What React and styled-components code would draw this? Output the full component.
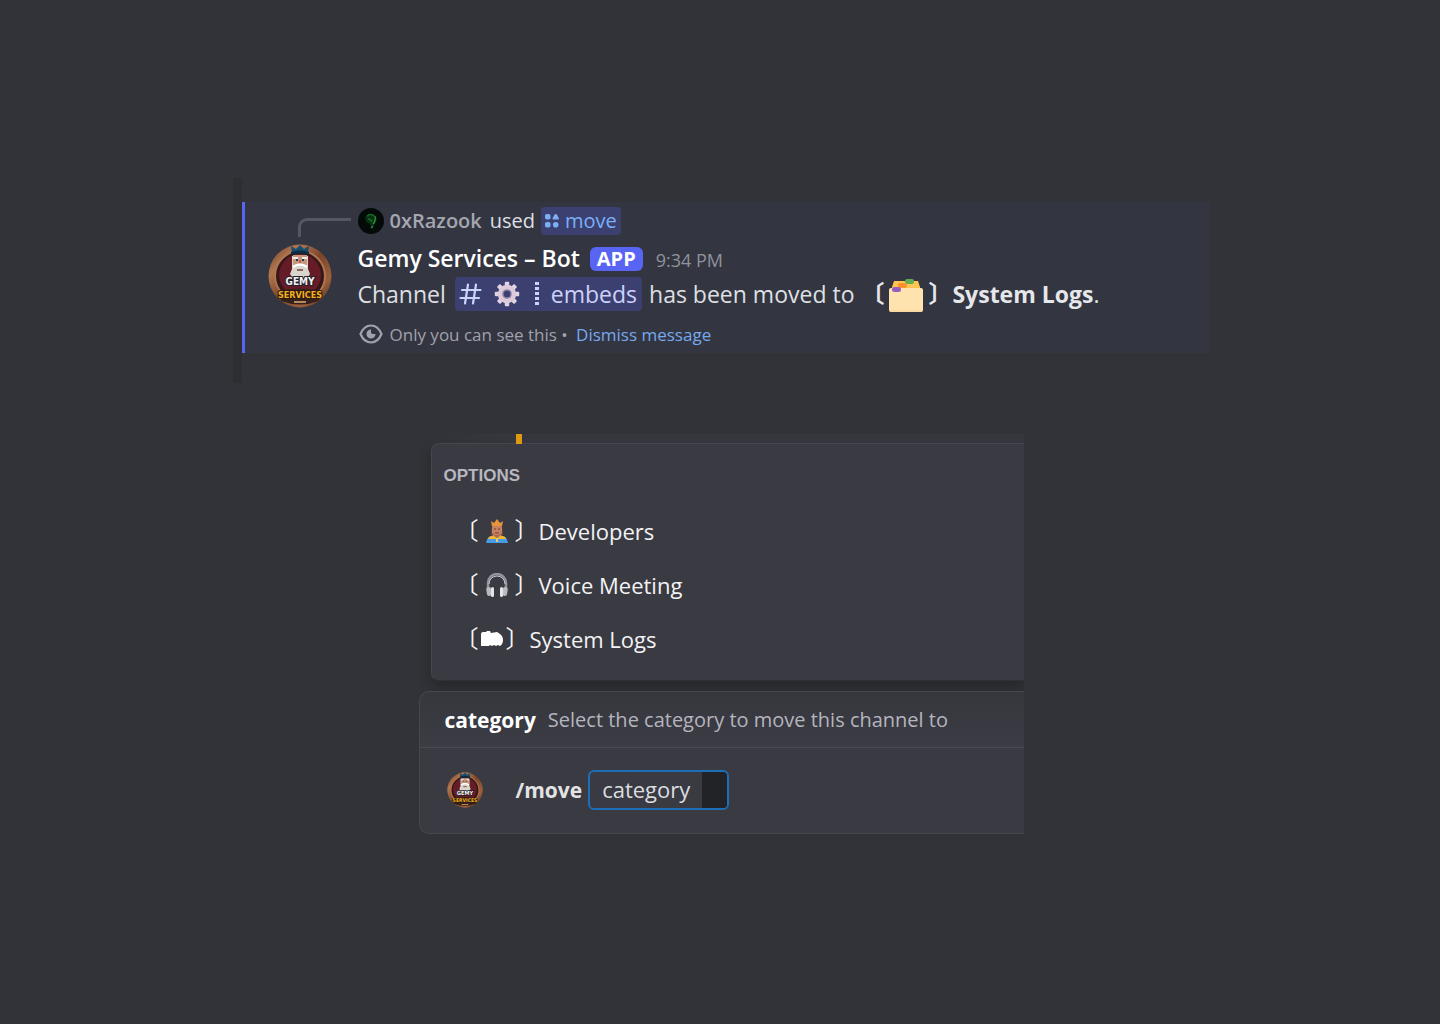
import React from "react";
import styled, { createGlobalStyle } from "styled-components";

const GlobalStyle = createGlobalStyle`
  *, *::before, *::after { box-sizing: border-box; }
  body {
    margin: 0;
    background: #323338;
    color: #dfe0e4;
    font-family: "Open Sans", "Noto Sans", "Noto Sans CJK JP", sans-serif;
  }
  button, input { font: inherit; color: inherit; }
`;

const Page = styled.main`
  display: flex;
  flex-direction: column;
  align-items: center;
  gap: 51px;
  min-height: 100vh;
  padding: 178px 24px 48px 26px;
`;

/* ---------- message ---------- */

const Thread = styled.section`
  display: flex;
  align-items: center;
  width: 100%;
  max-width: 977px;
  padding: 24px 0 30px;
  border-left: 9px solid #2d2e32;
`;

const Message = styled.article`
  display: flex;
  gap: 26px;
  flex: 1;
  padding-left: 23px;
  border-left: 3px solid #5865f2;
  background: #333541;
`;

const AvatarColumn = styled.div`
  display: flex;
  flex-direction: column;
  flex: none;
  width: 64px;
  padding-top: 16px;
`;

const Spine = styled.div`
  width: 53px;
  height: 19px;
  margin: 0 0 7px 30px;
  border-left: 3px solid #555762;
  border-top: 3px solid #555762;
  border-top-left-radius: 9px;
`;

const Body = styled.div`
  flex: 1;
  min-width: 0;
`;

const ReplyLine = styled.div`
  display: flex;
  align-items: center;
  height: 37px;
  font-size: 20px;
  line-height: 28px;
  color: #dfe0e4;
`;

const Invoker = styled.span`
  margin: 0 8px 0 6px;
  font-weight: 600;
  color: #a5a7b0;
`;

const CommandChip = styled.button`
  display: inline-flex;
  align-items: center;
  gap: 6px;
  height: 28px;
  margin-left: 6px;
  padding: 0 4px;
  border: 0;
  border-radius: 4px;
  background: #3c4070;
  color: #7bb0f5;
`;

const NameLine = styled.header`
  display: flex;
  align-items: center;
  height: 38px;
`;

const BotName = styled.h2`
  margin: 0;
  font-size: 23px;
  font-weight: 600;
  line-height: 36px;
  color: #fff;
`;

const AppTag = styled.span`
  height: 24px;
  margin: 2px 13px 0 10px;
  padding: 0 7px;
  border-radius: 6px;
  background: #5865f2;
  color: #fff;
  font-size: 20px;
  font-weight: 700;
  line-height: 24px;
`;

const Time = styled.time`
  padding-top: 3px;
  font-size: 18px;
  line-height: 24px;
  color: #90929c;
`;

const Content = styled.p`
  display: flex;
  align-items: center;
  height: 34px;
  margin: 0;
  font-size: 23px;
  line-height: 34px;
  white-space: pre;
`;

const ChannelMention = styled.a`
  display: inline-flex;
  align-items: center;
  height: 34px;
  margin: 0 7px 0 9px;
  padding: 0 5px 0 4px;
  border-radius: 4px;
  background: #3c4070;
  color: #ccd3fb;
  text-decoration: none;
`;

const Gear = styled.svg`
  margin: 0 15px 0 12px;
`;

const Divider = styled.svg`
  margin: 0 12px 0 0;
`;

const Destination = styled.strong`
  display: inline-flex;
  align-items: center;
  color: #e6e7ea;

  svg { margin: 2px 4px 0; }
`;

const Bracket = styled.span`
  padding-bottom: 5px;
  font-family: "Noto Sans CJK JP", sans-serif;
  font-size: 24px;
  font-weight: ${(p) => (p.$bold ? 700 : 400)};
  line-height: 34px;
`;

const Notice = styled.footer`
  display: flex;
  align-items: center;
  height: 42px;
  padding: 4px 0 0 1px;
  font-size: 17px;
  color: #a0a2ac;
  white-space: pre;

  svg { margin-right: 7px; }
  a { margin-left: 4px; color: #76a9ee; text-decoration: none; }
`;

/* ---------- slash command composer ---------- */

const Command = styled.section`
  width: 100%;
  max-width: 605px;
  overflow: hidden;
`;

const Strip = styled.div`
  display: flex;
  height: 10px;
  padding-left: 97px;
  margin-bottom: -1px;
  background: linear-gradient(90deg, #323338 0, #37373f 96px);
`;

const Mark = styled.i`
  position: relative;
  z-index: 1;
  width: 6px;
  background: #dd9a10;
`;

const Options = styled.div`
  margin: 0 0 10px 12px;
  padding: 16px 12px 14px;
  border: 1px solid #46474e;
  border-right: 0;
  border-bottom-color: #303136;
  border-radius: 8px 0 0 8px;
  background: #3a3a42;
  box-shadow: 0 8px 16px rgba(0, 0, 0, 0.24);
`;

const OptionsTitle = styled.h3`
  margin: 0 0 12px;
  font-family: "Liberation Sans", Arial, sans-serif;
  font-size: 17px;
  font-weight: 700;
  line-height: 32px;
  color: #b6b7bf;
`;

const OptionList = styled.ul`
  margin: 0;
  padding: 0;
  list-style: none;
`;

const Option = styled.button`
  display: flex;
  align-items: center;
  width: 100%;
  height: 54px;
  padding: 0 0 0 11px;
  border: 0;
  background: none;
  color: #f2f3f5;
  font-size: 22px;
  text-align: left;
`;

const Glyph = styled.span`
  display: inline-flex;
  justify-content: center;
  width: ${(p) => (p.$narrow ? 27 : 36)}px;
`;

const Composer = styled.form`
  position: relative;
  border: 1px solid #46474e;
  border-right: 0;
  border-radius: 10px 0 0 10px;
  background: #3a3a42;
`;

const Hint = styled.div`
  display: flex;
  align-items: center;
  gap: 12px;
  height: 56px;
  padding-left: 25px;
  border-bottom: 1px solid #484951;
  background: linear-gradient(#36363d, #3c3c45);
  border-top-left-radius: 10px;
  font-size: 20px;
  color: #b4b5be;

  strong { font-size: 21px; color: #fff; }
`;

const CommandRow = styled.div`
  display: flex;
  align-items: center;
  height: 85px;
  padding: 0 0 2px 27px;
`;

const CommandName = styled.span`
  margin: 0 6px 0 33px;
  font-size: 21px;
  font-weight: 700;
  color: #e2e3e6;
`;

const Field = styled.label`
  display: flex;
  height: 40px;
  overflow: hidden;
  border: 2px solid #1b6fb8;
  border-radius: 6px;
  padding-left: 12px;
  font-size: 22px;
  line-height: 34px;
  color: #dcdde1;
`;

const FieldInput = styled.input`
  width: 25px;
  margin-left: 12px;
  padding: 0;
  border: 0;
  outline: 0;
  background: #222327;
`;

/* ---------- drawings ---------- */

function BotAvatar({ size, id }) {
  return (
    <svg width={size} height={size} viewBox="0 0 64 64" aria-hidden="true">
      <defs>
        <linearGradient id={id} x1="0" y1="0" x2="1" y2="1">
          <stop offset="0" stopColor="#6e3d25" />
          <stop offset="0.25" stopColor="#b0764f" />
          <stop offset="0.5" stopColor="#7b452a" />
          <stop offset="0.75" stopColor="#9c603c" />
          <stop offset="1" stopColor="#3d241b" />
        </linearGradient>
      </defs>
      <circle cx="32" cy="32" r="31.5" fill={`url(#${id})`} />
      <circle cx="32" cy="32" r="26" fill="#b0764f" />
      <circle cx="32" cy="32" r="24" fill="#351719" />
      <circle cx="32" cy="31" r="21" fill="#651c26" />
      <path d="M24 12h16v13l2 5-4 6H26l-4-6 2-5z" fill="#d8d5cd" />
      <path d="M25 11h14v10H25z" fill="#c9957b" />
      <path d="M25 14h5M34 14h5" stroke="#eee" strokeWidth="2" />
      <path d="M28 16h2M34 16h2" stroke="#26364a" strokeWidth="2" />
      <path d="M31 16h2v5h-2z" fill="#a9684f" />
      <path d="M25 23q7-5 14 0" stroke="#fff" strokeWidth="2.5" fill="none" />
      <path d="M29 26h6" stroke="#733e35" strokeWidth="1.5" />
      <path d="M23 2l5 3 4-4 4 4 5-3-1 8q-8-2-16 0z" fill="#174f6e" />
      <path d="M23 8q9-3 18 0v3q-9-3-18 0z" fill="#0d2d42" />
      <path d="M10 47q22-5 44 0l-3 10q-19 7-38 0z" fill="#35211b" />
      <g fontFamily="'Liberation Sans Narrow', 'DejaVu Sans Condensed', sans-serif" fontWeight="700" textAnchor="middle" paintOrder="stroke">
        <text x="32" y="41" fontSize="10" fill="#f2f2f4" stroke="#25212a" strokeWidth="2">GEMY</text>
        <text x="32" y="54" fontSize="9" fill="#f2b01e" stroke="#2b1811" strokeWidth="2">SERVICES</text>
      </g>
      <path d="M26 58h12" stroke="#e2ad7d" strokeWidth="1.5" />
    </svg>
  );
}

function UserAvatar() {
  return (
    <svg width="26" height="26" viewBox="0 0 26 26" aria-hidden="true">
      <circle cx="13" cy="13" r="13" fill="#030a07" />
      <path d="M7 9q6-6 11-1 2 4-1 7l-3 6-2-5-4-2z" fill="#0a3013" />
      <path d="M9 8q4-3 7 0M10 11q3 0 4 3" stroke="#166b27" strokeWidth="1.6" fill="none" />
      <path d="M17 8q1 5-2 8M15 18l-2 2" stroke="#2a9a3c" strokeWidth="1.2" fill="none" />
    </svg>
  );
}

function CommandIcon() {
  return (
    <svg width="14" height="14" viewBox="0 0 14 14" fill="currentColor" aria-hidden="true">
      <rect x="0" y="0" width="5.5" height="5.5" rx="1.8" />
      <path d="M10.7 0q1 0 1.400 1l1.600 3q.500 1.500-1 1.500h-4q-1.500 0-1-1.500l1.600-3q.400-1 1.400-1z" />
      <rect x="0" y="8" width="5.5" height="5.5" rx="1.8" />
      <circle cx="10.7" cy="10.7" r="2.8" />
    </svg>
  );
}

function GearIcon() {
  const teeth = [0, 45, 90, 135, 180, 225, 270, 315];
  return (
    <Gear width="26" height="26" viewBox="0 0 26 26" aria-hidden="true">
      {teeth.map((a) => (
        <rect key={a} x="10.8" y="0.8" width="4.4" height="6" rx="1" fill="#e2d4e2" transform={`rotate(${a} 13 13)`} />
      ))}
      <circle cx="13" cy="13" r="6.5" fill="none" stroke="#dccada" strokeWidth="5.4" />
      <circle cx="13" cy="13" r="4.2" fill="none" stroke="#8f80a6" strokeWidth="1.2" />
    </Gear>
  );
}

function HashIcon() {
  return (
    <svg width="23" height="24" viewBox="0 0 23 24" fill="none" stroke="currentColor" strokeWidth="2.2" strokeLinecap="round" aria-hidden="true">
      <path d="M9 2.500L6 21.500M17 2.500l-3 19M3 8h18.500M1.500 16H20" />
    </svg>
  );
}

function FolderIcon() {
  return (
    <svg width="36" height="34" viewBox="0 0 36 34" aria-hidden="true">
      <path d="M4 9l2-6h24l2 6v6H4z" fill="#ffc553" />
      <rect x="17" y="1" width="9" height="5" rx="2" fill="#60ad54" />
      <path d="M1 12q0-2 2-2h30q2 0 2 2v20q0 2-2 2H3q-2 0-2-2z" fill="#ffe3af" />
      <rect x="10" y="5" width="9" height="5" rx="2" fill="#ff922c" />
      <rect x="4" y="9" width="9" height="5" rx="2.5" fill="#925fc0" />
      <path d="M2 33h32" stroke="#f4cf91" />
    </svg>
  );
}

function EyeIcon() {
  return (
    <svg width="24" height="22" viewBox="0 0 24 22" fill="none" stroke="currentColor" aria-hidden="true">
      <path d="M1.500 11C4 5 8 2.500 12 2.500s8 2.500 10.500 8.500C20 17 16 19.500 12 19.500S4 17 1.500 11z" strokeWidth="2.2" />
      <path d="M12 6.500a4.500 4.500 0 1 0 4.500 4.500h-2.800A1.800 1.800 0 0 1 12 9.200z" fill="currentColor" stroke="none" />
    </svg>
  );
}

function RoyalIcon() {
  return (
    <svg width="22" height="24" viewBox="0 0 22 24" aria-hidden="true">
      <path d="M6 5l-1 11h12L16 5z" fill="#85452f" />
      <path d="M0 24q1-6 5-7h12q4 1 5 7z" fill="#479ce5" />
      <path d="M3 18l5-2 3 3 3-3 5 2 1 2H2z" fill="#f4b52d" />
      <path d="M8 13h6v4l-3 2-3-2z" fill="#aa694e" />
      <rect x="6" y="6" width="10" height="10" rx="3" fill="#c58162" />
      <path d="M5 2l3 2 3-4 3 4 3-2-1 5H6z" fill="#e7953b" />
      <path d="M8 10h2M12 10h2M9 14h4" stroke="#70412f" />
      <path d="M11 19v4" stroke="#e0ca75" strokeWidth="2" />
    </svg>
  );
}

function HeadphonesIcon() {
  return (
    <svg width="22" height="24" viewBox="0 0 22 24" aria-hidden="true">
      <path d="M2 17V10a9 9 0 0 1 18 0v7" fill="none" stroke="#92939c" strokeWidth="2.5" />
      <path d="M3 11a8 8 0 0 1 16 0" fill="none" stroke="#c5c5cc" />
      <rect x="0.5" y="14" width="5" height="9" rx="2.5" fill="#b9bac2" transform="rotate(-8 3 18)" />
      <rect x="16.5" y="14" width="5" height="9" rx="2.5" fill="#b9bac2" transform="rotate(8 19 18)" />
      <rect x="5" y="14" width="3" height="10" rx="1.5" fill="#e4e4e8" />
      <rect x="14" y="14" width="3" height="10" rx="1.5" fill="#e4e4e8" />
    </svg>
  );
}

function FilesIcon() {
  return (
    <svg width="22" height="16" viewBox="0 0 22 16" fill="#fff" aria-hidden="true">
      <path d="M0 3q0-2 2-2h3l1-1h3l1 2 6-1 3 2q3 2 3 6t-3 6l-2-1-2 1-2-1-2 1-2-1-1 1H0z" />
    </svg>
  );
}

const options = [
  { name: "Developers", Icon: RoyalIcon },
  { name: "Voice Meeting", Icon: HeadphonesIcon },
  { name: "System Logs", Icon: FilesIcon, narrow: true },
];

export default function App() {
  return (
    <>
      <GlobalStyle />
      <Page>
        <Thread>
          <Message>
            <AvatarColumn>
              <Spine />
              <BotAvatar size={64} id="ring-large" />
            </AvatarColumn>
            <Body>
              <ReplyLine>
                <UserAvatar />
                <Invoker>0xRazook</Invoker>
                used
                <CommandChip type="button">
                  <CommandIcon />
                  move
                </CommandChip>
              </ReplyLine>
              <NameLine>
                <BotName>Gemy Services – Bot</BotName>
                <AppTag>APP</AppTag>
                <Time>9:34 PM</Time>
              </NameLine>
              <Content>
                Channel
                <ChannelMention href="#embeds">
                  <HashIcon />
                  <GearIcon />
                  <Divider width="4" height="26" viewBox="0 0 4 26" aria-hidden="true">
                    <path d="M2 1v24" stroke="currentColor" strokeWidth="4" strokeDasharray="3 2" />
                  </Divider>
                  embeds
                </ChannelMention>
                <span>has been moved to </span>
                <Destination>
                  <Bracket $bold>〔</Bracket>
                  <FolderIcon />
                  <Bracket $bold>〕</Bracket>
                  System Logs
                </Destination>
                .
              </Content>
              <Notice>
                <EyeIcon />
                Only you can see this •{" "}
                <a href="#dismiss">Dismiss message</a>
              </Notice>
            </Body>
          </Message>
        </Thread>

        <Command>
          <Strip>
            <Mark />
          </Strip>
          <Options>
            <OptionsTitle>OPTIONS</OptionsTitle>
            <OptionList>
              {options.map(({ name, Icon, narrow }) => (
                <li key={name}>
                  <Option type="button">
                    <Bracket>〔</Bracket>
                    <Glyph $narrow={narrow}>
                      <Icon />
                    </Glyph>
                    <Bracket>〕</Bracket>
                    {name}
                  </Option>
                </li>
              ))}
            </OptionList>
          </Options>
          <Composer>
            <Hint>
              <strong>category</strong>
              Select the category to move this channel to
            </Hint>
            <CommandRow>
              <BotAvatar size={36} id="ring-small" />
              <CommandName>/move</CommandName>
              <Field>
                category
                <FieldInput type="text" />
              </Field>
            </CommandRow>
          </Composer>
        </Command>
      </Page>
    </>
  );
}
